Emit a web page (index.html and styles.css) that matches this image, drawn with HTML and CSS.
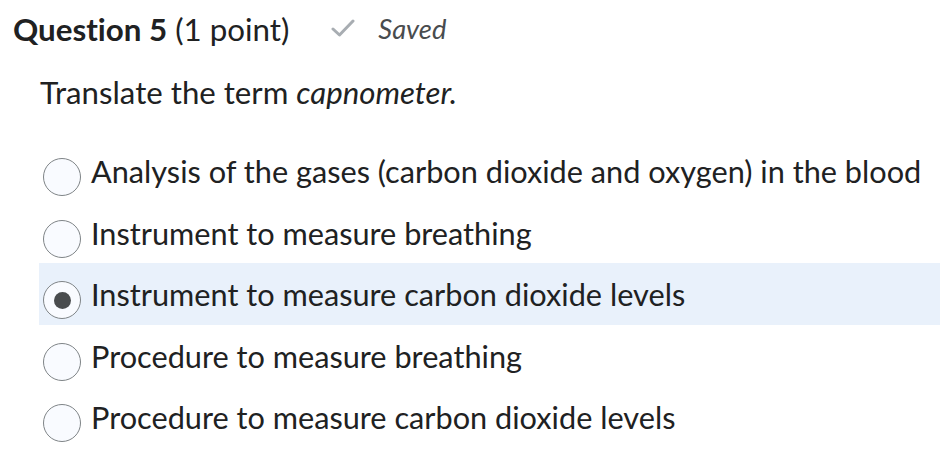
FILE: index.html
```html
<!DOCTYPE html>
<html lang="en">
<head>
<meta charset="utf-8">
<title>Question 5</title>
<link rel="stylesheet" href="styles.css">
</head>
<body>
<div class="question">
  <div class="q-header">
    <h2 class="q-title"><strong>Question 5</strong> (1 point)</h2>
    <span class="saved">
      <svg class="check" viewBox="0 0 24 18" width="24" height="18" aria-hidden="true">
        <path d="M2 10 L8.5 16 L22 2" fill="none" stroke="#a8adb2" stroke-width="3" stroke-linecap="round" stroke-linejoin="round"/>
      </svg>
      <em>Saved</em>
    </span>
  </div>
  <p class="q-text">Translate the term <em>capnometer.</em></p>
  <div class="options">
    <label class="option"><span class="radio"></span><span class="opt-text">Analysis of the gases (carbon dioxide and oxygen) in the blood</span></label>
    <label class="option"><span class="radio"></span><span class="opt-text">Instrument to measure breathing</span></label>
    <label class="option selected"><span class="radio checked"></span><span class="opt-text">Instrument to measure carbon dioxide levels</span></label>
    <label class="option"><span class="radio"></span><span class="opt-text">Procedure to measure breathing</span></label>
    <label class="option"><span class="radio"></span><span class="opt-text">Procedure to measure carbon dioxide levels</span></label>
  </div>
</div>
</body>
</html>
```

FILE: styles.css
```css
* { box-sizing: border-box; }
html, body { margin: 0; padding: 0; background: #ffffff; }
body {
  font-family: Lato, "Noto Sans", sans-serif;
  color: #202122;
  width: 940px;
  height: 454px;
  overflow: hidden;
  font-variant-ligatures: no-common-ligatures;
}
.q-header {
  display: flex;
  align-items: center;
  padding: 13px 0 0 13px;
  height: 45px;
}
.q-title {
  margin: 0;
  font-size: 31.3px;
  font-weight: 400;
  line-height: 32px;
  white-space: nowrap;
}
.q-title strong { font-weight: 700; }
.saved {
  display: flex;
  align-items: center;
  margin-left: 42px;
  color: #494c4e;
  font-size: 27.3px;
  line-height: 32px;
}
.saved .check { margin-right: 23px; margin-top: -2px; }
.saved em { font-style: italic; }
.q-text {
  margin: 31px 0 0 40px;
  font-size: 31.2px;
  line-height: 32px;
  white-space: nowrap;
}
.q-text em { font-style: italic; }
.options {
  margin-top: 32px;
  margin-left: 39px;
  display: flex;
  flex-direction: column;
}
.option {
  display: flex;
  align-items: flex-start;
  height: 61.5px;
  padding: 18px 0 0 4px;
}
.option.selected { background: #e9f1fb; }
.radio {
  flex: none;
  width: 38px;
  height: 38px;
  border: 1.5px solid #7f8487;
  border-radius: 50%;
  background: #f9fbff;
  display: flex;
  align-items: center;
  justify-content: center;
}
.radio.checked::after {
  content: "";
  width: 17px;
  height: 17px;
  border-radius: 50%;
  background: #494c4e;
}
.opt-text {
  margin: -4px 0 0 10px;
  font-size: 30.7px;
  line-height: 36px;
  white-space: nowrap;
}
```
